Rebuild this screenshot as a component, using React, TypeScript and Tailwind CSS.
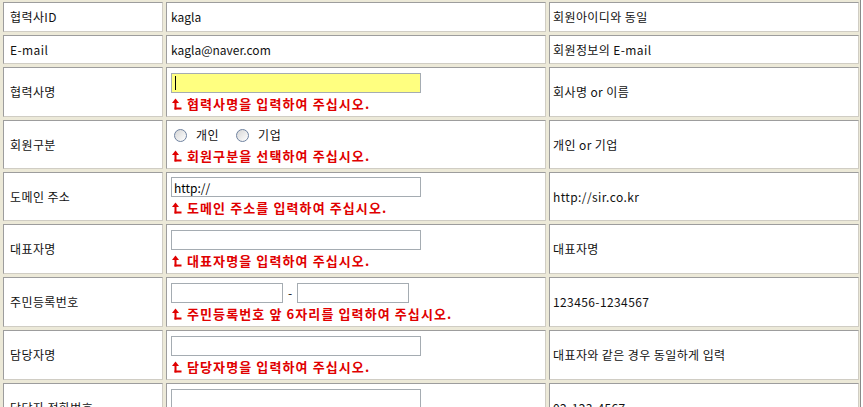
import React from "react";

const FONT = { fontFamily: '"Noto Sans CJK KR", "Noto Sans", sans-serif' };

function Arrow() {
  return (
    <svg width="10" height="12" viewBox="0 0 10 12" className="shrink-0">
      <polygon points="0,5 3.5,0.5 7,5" fill="#e00000" />
      <rect x="2.5" y="4" width="2" height="7.5" fill="#e00000" />
      <rect x="2.5" y="9.5" width="7" height="2" fill="#e00000" />
    </svg>
  );
}

function Msg({ text }: { text: string }) {
  return (
    <div className="mt-[3px] flex items-center gap-[5px] pl-[1px] text-[13px] leading-[16px] font-bold text-[#e00000] tracking-[1.1px]">
      <Arrow />
      <span>{text}</span>
    </div>
  );
}

function TextInput({ value, w = "w-[250px]" }: { value?: string; w?: string }) {
  return (
    <input
      readOnly
      value={value ?? ""}
      className={`${w} h-[20px] border border-[#a5acb2] bg-white px-[2px] text-[12px] text-black outline-none`}
      style={FONT}
    />
  );
}

function Radio({ label }: { label: string }) {
  return (
    <label className="flex items-center gap-[9px]">
      <span className="w-[13px] h-[13px] rounded-full border border-[#6f82a0] bg-gradient-to-br from-[#d6d6d6] to-white" />
      <span className="tracking-[0.5px]">{label}</span>
    </label>
  );
}

interface Row {
  label: string;
  h: string;
  field: React.ReactNode;
  note: string;
}

const rows: Row[] = [
  { label: "협력사ID", h: "h-[30px]", field: <span>kagla</span>, note: "회원아이디와 동일" },
  { label: "E-mail", h: "h-[29px]", field: <span>kagla@naver.com</span>, note: "회원정보의 E-mail" },
  {
    label: "협력사명",
    h: "h-[50px]",
    field: (
      <div>
        <div className="w-[250px] h-[20px] border border-[#a5acb2] bg-[#ffff80] flex items-center pl-[3px]">
          <span className="w-[1px] h-[14px] bg-black" />
        </div>
        <Msg text="협력사명을 입력하여 주십시오." />
      </div>
    ),
    note: "회사명 or 이름",
  },
  {
    label: "회원구분",
    h: "h-[49px]",
    field: (
      <div>
        <div className="h-[20px] flex items-center gap-[17px] pl-[3px]">
          <Radio label="개인" />
          <Radio label="기업" />
        </div>
        <Msg text="회원구분을 선택하여 주십시오." />
      </div>
    ),
    note: "개인 or 기업",
  },
  {
    label: "도메인 주소",
    h: "h-[49px]",
    field: (
      <div>
        <TextInput value="http://" />
        <Msg text="도메인 주소를 입력하여 주십시오." />
      </div>
    ),
    note: "http://sir.co.kr",
  },
  {
    label: "대표자명",
    h: "h-[50px]",
    field: (
      <div>
        <TextInput />
        <Msg text="대표자명을 입력하여 주십시오." />
      </div>
    ),
    note: "대표자명",
  },
  {
    label: "주민등록번호",
    h: "h-[50px]",
    field: (
      <div>
        <div className="flex items-center">
          <TextInput w="w-[112px]" />
          <span className="w-[14px] text-center">-</span>
          <TextInput w="w-[112px]" />
        </div>
        <Msg text="주민등록번호 앞 6자리를 입력하여 주십시오." />
      </div>
    ),
    note: "123456-1234567",
  },
  {
    label: "담당자명",
    h: "h-[50px]",
    field: (
      <div>
        <TextInput />
        <Msg text="담당자명을 입력하여 주십시오." />
      </div>
    ),
    note: "대표자와 같은 경우 동일하게 입력",
  },
  {
    label: "담당자 전화번호",
    h: "h-[50px]",
    field: (
      <div>
        <TextInput />
        <Msg text="담당자 전화번호를 입력하여 주십시오." />
      </div>
    ),
    note: "02-123-4567",
  },
];

const cell =
  "flex items-center border-t border-l border-[#9d9d9d] border-b-[#d0cdc4] border-r-[#d0cdc4] border-b border-r bg-white";

export default function App() {
  return (
    <div className="bg-white min-h-screen text-[12px] text-[#111]" style={FONT}>
      <div className="w-[861px] bg-[#ece9d8] pl-[3px] pr-[1px] pt-[2px] pb-[2px] border-r border-b border-[#8a8a8a]">
        <div className="grid grid-cols-[160px_380px_310px] gap-[3px]">
          {rows.map((r) => (
            <React.Fragment key={r.label}>
              <div className={`${cell} ${r.h} pl-[6px] tracking-[0.4px]`}>{r.label}</div>
              <div className={`${cell} ${r.h} pl-[4px]`}>{r.field}</div>
              <div className={`${cell} ${r.h} pl-[3px] tracking-[0.4px]`}>{r.note}</div>
            </React.Fragment>
          ))}
        </div>
      </div>
    </div>
  );
}
